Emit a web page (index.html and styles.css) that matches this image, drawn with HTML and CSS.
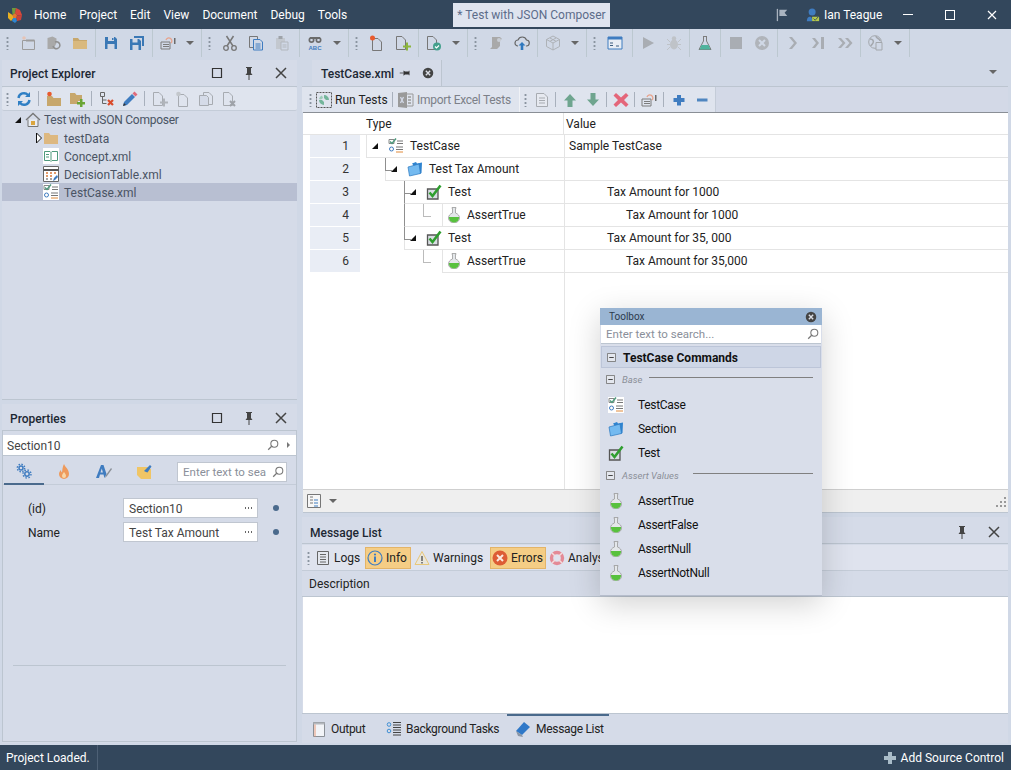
FILE: index.html
```html
<!DOCTYPE html>
<html lang="en">
<head>
    <meta charset="UTF-8">
    <meta name="viewport" content="width=device-width, initial-scale=1.0">
    <title>Test with JSON Composer</title>
    <link rel="stylesheet" href="styles.css">
</head>
<body>
    <!-- icon sheet -->
    <svg class="icon-sheet" xmlns="http://www.w3.org/2000/svg">
        <symbol id="i-logo" viewBox="0 0 16 16"><path d="M5 1h4L8 6 5.500 8z" fill="#6f9a3c"/><path d="M9 1l4 2 2 5-5 .500L8 6z" fill="#d8483a"/><path d="M1 5l4.500 3L7 11l-3 3-3-3z" fill="#e8b022"/><path d="M15 8l-1 5-4 1-1-3 1-2.500z" fill="#c9433a"/><path d="M6 11l3 0 1 3-2 2-3-2z" fill="#2f86cf"/><path d="M5.500 8L8 6l2 2.500L9 11H6.500z" fill="#e6762e"/></symbol>
        <symbol id="i-flag" viewBox="0 0 16 16"><path d="M2 1h1.500v14H2z" fill="#a9b3bf"/><path d="M5 2h9l-3 3.500L14 9H5z" fill="#a9b3bf"/></symbol>
        <symbol id="i-user" viewBox="0 0 16 16"><circle cx="7" cy="4.500" r="4" fill="#3f7cc0"/><path d="M1 15c0-5 3-5 4-5s2 1 2 5z" fill="#3f7cc0"/><path d="M7 10h8v5H7z" fill="#b5c94c"/><path d="M8.500 12l2 2 3.500-4" fill="none" stroke="#34495e"/></symbol>
        <symbol id="i-new-dim" viewBox="0 0 16 16"><path d="M2.500 5.500h12v9h-12z" fill="none" stroke="#9c9c9c"/><path d="M6 5.500h8.500" stroke="#9c9c9c" stroke-width="2"/><circle cx="4" cy="3" r="1.800" fill="#e6c3b5"/></symbol>
        <symbol id="i-recent-dim" viewBox="0 0 16 16"><path d="M1.500 14V3l5-1.500 4 2V8l-3 6z" fill="#a9a9a9"/><path d="M9 7a3.500 3.500 0 1 1-2 4" fill="none" stroke="#8f8f8f" stroke-width="1.500"/></symbol>
        <symbol id="i-folder" viewBox="0 0 16 16"><path d="M1 3h5l1.500 2H15v9H1z" fill="#c7a76c"/><path d="M1 6h14v8H1z" fill="#d9b97e"/></symbol>
        <symbol id="i-folder-light" viewBox="0 0 16 16"><path d="M1 3h5l1.500 2H15v9H1z" fill="#ddb880"/></symbol>
        <symbol id="i-save" viewBox="0 0 16 16"><path d="M2 2h10l2 2v10H2z" fill="#3a78b5"/><path d="M5 2h6v4H5z" fill="#d0d8e6"/><path d="M4.500 9h7v5h-7z" fill="#d0d8e6"/><path d="M9 3h1.500v2H9z" fill="#3a78b5"/></symbol>
        <symbol id="i-save-all" viewBox="0 0 16 16"><path d="M5 1h10v10h-2V3H5z" fill="#3a78b5"/><path d="M1 4h9l2 2v9H1z" fill="#3a78b5"/><path d="M3.500 4h5v3.500h-5z" fill="#d0d8e6"/><path d="M3.500 10h6v5h-6z" fill="#d0d8e6"/></symbol>
        <symbol id="i-deploy" viewBox="0 0 16 16"><path d="M1 7h9v7H1z" fill="none" stroke="#7c7c7c"/><path d="M3 9.500h6M3 11.500h6" stroke="#7c7c7c"/><path d="M6 5a3 3 0 1 1 5 3" fill="none" stroke="#e8a38c" stroke-width="1.300"/><path d="M14 3h1.500v6H14z" fill="#6a6a6a"/></symbol>
        <symbol id="i-cut" viewBox="0 0 16 16"><circle cx="4" cy="13" r="2.300" fill="none" stroke="#777" stroke-width="1.300"/><circle cx="12" cy="13" r="2.300" fill="none" stroke="#777" stroke-width="1.300"/><path d="M5 11 11.500 1M11 11 4.500 1" stroke="#777" stroke-width="1.500"/></symbol>
        <symbol id="i-copy" viewBox="0 0 16 16"><path d="M1.500 1.500h8v11h-8z" fill="#d0d8e6" stroke="#777"/><path d="M5.500 4.500H12l2.500 2.500v8h-9z" fill="#d0d8e6" stroke="#3f7cc0"/><path d="M7.500 9h5M7.500 11h5M7.500 13h5" stroke="#3f7cc0"/></symbol>
        <symbol id="i-paste-dim" viewBox="0 0 16 16"><path d="M2 3h9v11H2z" fill="#c3c8cf"/><path d="M4.500 1h4v3h-4z" fill="#9ea3a9"/><path d="M7 7h7v8H7z" fill="#d0d8e6" stroke="#b2b7bd"/><path d="M8.500 10h4M8.500 12h4" stroke="#b2b7bd"/></symbol>
        <symbol id="i-find" viewBox="0 0 16 16"><circle cx="4.500" cy="5" r="3" fill="#6b6b6b"/><circle cx="11.500" cy="5" r="3" fill="#6b6b6b"/><circle cx="4.500" cy="5" r="1.300" fill="#d0d8e6"/><circle cx="11.500" cy="5" r="1.300" fill="#d0d8e6"/><path d="M3 2h10v2H3z" fill="#6b6b6b"/><text x="8" y="15" text-anchor="middle" class="abc">ABC</text></symbol>
        <symbol id="i-file-new" viewBox="0 0 16 16"><path d="M3.500 3.500H9l3.500 3.500v8.500h-9z" fill="none" stroke="#777"/><circle cx="3.500" cy="3" r="2.500" fill="#e85a2e"/></symbol>
        <symbol id="i-file-add" viewBox="0 0 16 16"><path d="M1.500 1.500H7L10.500 5v9.500h-9z" fill="none" stroke="#777"/><path d="M11 7.500h2v3h3v2h-3v3h-2v-3H8v-2h3z" fill="#8cb63c"/></symbol>
        <symbol id="i-file-check" viewBox="0 0 16 16"><path d="M1.500 1.500H7L10.500 5v9.500h-9z" fill="none" stroke="#777"/><circle cx="11" cy="11.500" r="4" fill="#44a08d"/><path d="M9 11.500l1.500 1.500 2.500-2.500" fill="none" stroke="#fff" stroke-width="1.200"/></symbol>
        <symbol id="i-scroll-dim" viewBox="0 0 16 16"><path d="M4 2h8l2 2-2 1v6l-3 3H2l2-2z" fill="#a9a9a9"/><circle cx="11" cy="5" r="2" fill="#c8cdd4"/></symbol>
        <symbol id="i-upload" viewBox="0 0 16 16"><path d="M4 11a3 3 0 0 1 0-6 4.500 4.500 0 0 1 8.500 0 3 3 0 0 1-.500 6" fill="none" stroke="#666" stroke-width="1.200"/><path d="M8 7l3.500 3.500H9.300V15H6.700v-4.500H4.500z" fill="#2f78be"/></symbol>
        <symbol id="i-cube-dim" viewBox="0 0 16 16"><path d="M8 1l6.500 3.500v7L8 15l-6.500-3.500v-7zM1.500 4.500 8 8l6.500-3.500M8 8v7M5 3l6 3.300M11 3 5 6.300" fill="none" stroke="#aeb2b7"/></symbol>
        <symbol id="i-console" viewBox="0 0 16 16"><path d="M1 2h14v12H1z" fill="#e8edf4" stroke="#3f7cc0"/><path d="M1 2h14v2.500H1z" fill="#3f7cc0"/><path d="M3 8h3M3 10.500h3M9 11h3" stroke="#3f5f80"/></symbol>
        <symbol id="i-play-dim" viewBox="0 0 16 16"><path d="M3 2l11 6-11 6z" fill="#a9adb3"/></symbol>
        <symbol id="i-bug-dim" viewBox="0 0 16 16"><ellipse cx="8" cy="9.500" rx="4" ry="5" fill="#bfc3c8"/><circle cx="8" cy="3.500" r="2.200" fill="#bfc3c8"/><path d="M1 4l3 3M15 4l-3 3M1 9.500h3M15 9.500h-3M1 15l3-3M15 15l-3-3" stroke="#bfc3c8"/></symbol>
        <symbol id="i-flask" viewBox="0 0 16 16"><path d="M6 1.500h4M6.500 1.500V6L2 14.500h12L9.500 6V1.500" fill="none" stroke="#7c7c7c"/><path d="M4.500 10h7l2 4.500h-11z" fill="#4fb39d"/></symbol>
        <symbol id="i-stop-dim" viewBox="0 0 16 16"><path d="M2 2h12v12H2z" fill="#a9adb3"/></symbol>
        <symbol id="i-cancel-dim" viewBox="0 0 16 16"><circle cx="8" cy="8" r="7" fill="#b0b4ba"/><path d="M5 5l6 6M11 5l-6 6" stroke="#d0d8e6" stroke-width="2"/></symbol>
        <symbol id="i-chev-dim" viewBox="0 0 16 16"><path d="M4 2h3l5 6-5 6H4l5-6z" fill="#a9adb3"/></symbol>
        <symbol id="i-chev-end-dim" viewBox="0 0 16 16"><path d="M1 3h3l4 5-4 5H1l4-5z" fill="#a9adb3"/><path d="M10 2h3v12h-3z" fill="#a9adb3"/></symbol>
        <symbol id="i-chev-dbl-dim" viewBox="0 0 16 16"><path d="M1 3h3l4.500 5L4 13H1l4.500-5zM8 3h3l4.500 5-4.500 5H8l4.500-5z" fill="#a9adb3"/></symbol>
        <symbol id="i-globe-dim" viewBox="0 0 16 16"><circle cx="7" cy="7" r="6.300" fill="none" stroke="#a3a7ac"/><path d="M2 4c3 0 4 2 3 4s-2 2-2 3M8 1c0 3 4 2 4 5" fill="none" stroke="#a3a7ac" stroke-width="1.500"/><path d="M8 7.500h6v7.500H8z" fill="#d0d8e6" stroke="#a3a7ac"/></symbol>
        <symbol id="i-refresh" viewBox="0 0 16 16"><path d="M2.500 7a5.500 5.500 0 0 1 9.500-3" fill="none" stroke="#2f7fc4" stroke-width="2.400"/><path d="M13.500 9A5.500 5.500 0 0 1 4 12" fill="none" stroke="#2f7fc4" stroke-width="2.400"/><path d="M14 1v5h-5zM2 15v-5h5z" fill="#2f7fc4"/></symbol>
        <symbol id="i-folder-new" viewBox="0 0 16 16"><path d="M1 5h5l1.500 2H15v8H1z" fill="#c7a76c"/><circle cx="3.500" cy="3" r="2.300" fill="#e85a2e"/></symbol>
        <symbol id="i-folder-add" viewBox="0 0 16 16"><path d="M1 2h5l1.500 2H13v6h-4v3H1z" fill="#c7a76c"/><path d="M11 8h2.500v3H16v2.500h-2.500V16H11v-2.500H8V11h3z" fill="#6aa535"/></symbol>
        <symbol id="i-tree-del" viewBox="0 0 16 16"><path d="M1.500 1.500h4v4h-4zM3.500 5.500v7h4M3.500 9h4" fill="none" stroke="#666"/><path d="M9 9l5 5M14 9l-5 5" stroke="#d94b2b" stroke-width="2.200"/></symbol>
        <symbol id="i-pencil" viewBox="0 0 16 16"><path d="M1 15l1-4 8-8 3 3-8 8z" fill="#3f7cc0"/><path d="M10.500 2.500l2-2 3 3-2 2z" fill="#e06a7a"/><path d="M1 15l1-3 2 2z" fill="#333"/></symbol>
        <symbol id="i-file-add-dim" viewBox="0 0 16 16"><path d="M1.500 1.500H7L10.500 5v9.500h-9z" fill="none" stroke="#a7abb1"/><path d="M11 7.500h2v3h3v2h-3v3h-2v-3H8v-2h3z" fill="#b0b4ba"/></symbol>
        <symbol id="i-file-new-dim" viewBox="0 0 16 16"><path d="M3.500 3.500H9l3.500 3.500v8.500h-9z" fill="none" stroke="#a7abb1"/><circle cx="3.500" cy="3" r="2.300" fill="#c3c7cc"/></symbol>
        <symbol id="i-files-dim" viewBox="0 0 16 16"><path d="M5.500 1.500H11L14.500 5v8.500h-9z" fill="none" stroke="#a7abb1"/><path d="M1.500 4.500h7l2 2v8h-9z" fill="#d5dbe8" stroke="#a7abb1"/></symbol>
        <symbol id="i-file-x-dim" viewBox="0 0 16 16"><path d="M2.500 1.500H8L11.500 5v9.500h-9z" fill="none" stroke="#a7abb1"/><path d="M9 10l5 5M14 10l-5 5" stroke="#9ea2a8" stroke-width="2"/></symbol>
        <symbol id="i-home" viewBox="0 0 16 16"><path d="M1 8l7-6.500L15 8" fill="none" stroke="#777" stroke-width="1.300"/><path d="M3 7.500v7h10v-7" fill="#e8ecf2" stroke="#777"/><path d="M6 9h4v4H6z" fill="#dba63f"/></symbol>
        <symbol id="i-concept" viewBox="0 0 16 16"><path d="M0 0h16v16H0z" fill="#fff"/><path d="M1.500 3.500h5.500l1 1 1-1h5.500v9h-5.500l-1 1-1-1H1.500zM8 4.500v8M3 6.500h3M3 9h3" fill="none" stroke="#4f9a7d"/></symbol>
        <symbol id="i-table" viewBox="0 0 16 16"><path d="M0 0h16v16H0z" fill="#fff"/><path d="M.5.500h15v15H.5z" fill="none" stroke="#666"/><path d="M.5 4h15" stroke="#555" stroke-width="2"/><path d="M3 7h2M7 7h2M11 7h2M3 10h2M7 10h2" stroke="#d97a3a" stroke-width="1.500"/><path d="M3 13h2M7 13h2" stroke="#888" stroke-width="1.500"/><path d="M10 15l1-3 3-3 1 2-3 3z" fill="#3f7cc0"/></symbol>
        <symbol id="i-case" viewBox="0 0 16 16"><path d="M1 1.500h5v4H1z" fill="none" stroke="#888"/><path d="M2 3.500l2 2 4-5" fill="none" stroke="#4f9a7d" stroke-width="1.500"/><path d="M9 3h6M9 5.500h6" stroke="#777"/><circle cx="3.500" cy="11" r="2" fill="none" stroke="#3f7cc0"/><path d="M8 9h7M8 11.500h7" stroke="#777"/><path d="M8 14h7" stroke="#e08a3a"/></symbol>
        <symbol id="i-section" viewBox="0 0 16 16"><path d="M5 2.500l4-1.500 1 1.500 5-1-.500 10.500-2 1z" fill="#2f84d0"/><path d="M1 6l11-3 1.500 9.500L2.500 15z" fill="#74baf0" stroke="#2b78c0" stroke-width=".700"/></symbol>
        <symbol id="i-test" viewBox="0 0 16 16"><path d="M1.500 5h10.500v10H1.500z" fill="#d9dde3" stroke="#555" stroke-width="1.300"/><path d="M3.500 8.500l3 3.500L14.500 1.500" fill="none" stroke="#2f9e2f" stroke-width="2.600"/></symbol>
        <symbol id="i-assert" viewBox="0 0 16 16"><path d="M6 .500h4v1H9.500V6c2.500.800 4 2.800 4 5a5.500 5 0 0 1-11 0c0-2.200 1.500-4.200 4-5V1.500H6z" fill="#e4e7ea" stroke="#9a9a9a" stroke-width=".800"/><path d="M3 10h10c.300 3-2 5.500-5 5.500S2.700 13 3 10z" fill="#58c13e"/></symbol>
        <symbol id="i-run" viewBox="0 0 16 16"><path d="M.5.500h15v15H.5z" fill="none" stroke="#555" stroke-dasharray="2 1"/><path d="M8 3a5 5 0 0 1 5 5h-3l-2-2zM3 8a5 5 0 0 0 5 5v-3L6 8z" fill="#74b59b"/><path d="M3 7a5 5 0 0 1 3-3.500l1 2.500-2 1.500z" fill="#9ccbb8"/></symbol>
        <symbol id="i-excel" viewBox="0 0 16 16"><path d="M5 2h10v12H5z" fill="none" stroke="#9a9a9a"/><path d="M0 1l9-1v16l-9-1z" fill="#9a9a9a"/><path d="M2.500 5l3 6M5.500 5l-3 6" stroke="#d3d9e7" stroke-width="1.300"/><path d="M10 5h3M10 8h3M10 11h3" stroke="#9a9a9a" stroke-width="1.500"/></symbol>
        <symbol id="i-doc-dim" viewBox="0 0 16 16"><path d="M2.500 1.500H10l3.500 3.500v9.500h-11z" fill="#e6e9f0" stroke="#a7abb1"/><path d="M5 6h6M5 8.500h6M5 11h6" stroke="#a7abb1"/></symbol>
        <symbol id="i-up" viewBox="0 0 16 16"><path d="M8 2l6 6.500h-3.500V15h-5V8.500H2z" fill="#6fa58f"/></symbol>
        <symbol id="i-down" viewBox="0 0 16 16"><path d="M8 14l6-6.500h-3.500V1h-5v6.500H2z" fill="#6fa58f"/></symbol>
        <symbol id="i-del" viewBox="0 0 16 16"><path d="M3 1l5 4.500L13 1l2.500 2.500L11 8l4.500 4.500L13 15l-5-4.500L3 15 .500 12.500 5 8 .500 3.500z" fill="#e4667a"/></symbol>
        <symbol id="i-plus" viewBox="0 0 16 16"><path d="M6 3h4v3h3.500v4H10v3.500H6V10H2.500V6H6z" fill="#3f7cc0"/></symbol>
        <symbol id="i-minus" viewBox="0 0 16 16"><path d="M3 6.500h10.500v3H3z" fill="#4f86c0"/></symbol>
        <symbol id="i-gears" viewBox="0 0 16 16"><g fill="none" stroke="#3f7cc0"><circle cx="5" cy="5" r="2" stroke-width="1.500"/><circle cx="5" cy="5" r="3.700" stroke-width="1.400" stroke-dasharray="1.500 1.400"/><circle cx="11" cy="11" r="2.200" stroke-width="1.500"/><circle cx="11" cy="11" r="4" stroke-width="1.400" stroke-dasharray="1.500 1.640"/></g></symbol>
        <symbol id="i-flame" viewBox="0 0 16 16"><path d="M8 0c1 3 5 5 5 10a5 5 0 0 1-10 0c0-2 1-3 2-4 0 1.500.500 2 1 2.500C6.500 5 6.500 3 8 0z" fill="#ee9a5c"/><path d="M8 8c1 1.500 2 2.500 2 4a2 2 0 0 1-4 0c0-1.500 1-2.500 2-4z" fill="#f8d7a8"/></symbol>
        <symbol id="i-style" viewBox="0 0 16 16"><path d="M0 14L5 1h2.500l3 9-2 4-1-3.500H4L3 14zM4.500 8.500h2.400L5.800 4.500z" fill="#3f7cc0"/><path d="M9 14l1-3 5-7 1 1-5 7z" fill="#8a8f96"/></symbol>
        <symbol id="i-note" viewBox="0 0 16 16"><path d="M1 3h11v2h3v10H5l-4-4z" fill="#f0c565"/><path d="M8 7l6-6 1.500 1.500-4 6-1.500-.500z" fill="#3f7cc0"/></symbol>
        <symbol id="i-search" viewBox="0 0 16 16"><circle cx="9.500" cy="6.500" r="4" fill="none" stroke="#777" stroke-width="1.200"/><path d="M6.500 9.500l-4 4" stroke="#777" stroke-width="1.500"/></symbol>
        <symbol id="i-logs" viewBox="0 0 16 16"><path d="M2.500 1.500h11v13h-11z" fill="#e4e7ee" stroke="#666"/><path d="M5 4.500h6M5 7h6M5 9.500h6M5 12h6" stroke="#666"/></symbol>
        <symbol id="i-info" viewBox="0 0 16 16"><circle cx="8" cy="8" r="7" fill="none" stroke="#3f7cc0" stroke-width="1.200"/><path d="M7 6.500h2V12H7z" fill="#3f7cc0"/><circle cx="8" cy="4.500" r="1.100" fill="#3f7cc0"/></symbol>
        <symbol id="i-warn" viewBox="0 0 16 16"><path d="M8 1.500l7 13H1z" fill="#e9e6dc" stroke="#e8c77a"/><path d="M7.200 6h1.600v5H7.200zM7.200 12h1.600v1.500H7.200z" fill="#666"/></symbol>
        <symbol id="i-error" viewBox="0 0 16 16"><circle cx="8" cy="8" r="7.500" fill="#dd5c35"/><path d="M5 5l6 6M11 5l-6 6" stroke="#fbe9df" stroke-width="2"/></symbol>
        <symbol id="i-analysis" viewBox="0 0 16 16"><circle cx="8" cy="8" r="5.500" fill="none" stroke="#e48a96" stroke-width="3.400"/><path d="M3 3l3 3M13 3l-3 3M3 13l3-3M13 13l-3-3" stroke="#f4dcdc" stroke-width="1.500"/></symbol>
        <symbol id="i-outline" viewBox="0 0 16 16"><path d="M1.500 1.500h13v13h-13z" fill="#f7f7f7" stroke="#777"/><path d="M4 4h3M4 7h3M4 10h3" stroke="#777"/><path d="M8 7h4M8 10h4M8 13h4" stroke="#3f7cc0"/></symbol>
        <symbol id="i-output" viewBox="0 0 16 16"><path d="M2.500 1.500h11v14h-11z" fill="#f2f4f8" stroke="#8a8f96"/><path d="M2.500 1.500h11v2h-11z" fill="#b4b8be"/><path d="M4 3.500v12" stroke="#e89a7a"/></symbol>
        <symbol id="i-tasks" viewBox="0 0 16 16"><circle cx="3" cy="3.500" r="1.800" fill="none" stroke="#3f8fd4"/><circle cx="3" cy="10" r="1.800" fill="none" stroke="#3f8fd4"/><path d="M7 1.500h8M7 4h8M7 6.500h8M7 9h8M7 11.500h8M7 14h8" stroke="#444"/></symbol>
        <symbol id="i-book" viewBox="0 0 16 16"><path d="M1 10L9 1l6 5-8 8z" fill="#2f78c8"/><path d="M1 10l6 4 1 2-5-1z" fill="#8a96a6"/></symbol>
        <symbol id="i-pin" viewBox="0 0 16 16"><path d="M5 2h6v1h-1v5l1.500 2h-7L6 8V3H5z" fill="#444"/><path d="M8 10v5" stroke="#444"/></symbol>
        <symbol id="i-pin-side" viewBox="0 0 16 16"><path d="M14 5v6h-1v-1H8l-2 1.500v-7L8 6h5V5z" fill="#333"/><path d="M6 8H1" stroke="#333"/></symbol>
        <symbol id="i-close" viewBox="0 0 16 16"><path d="M3 3l10 10M13 3L3 13" stroke="#444" stroke-width="1.500"/></symbol>
        <symbol id="i-max" viewBox="0 0 16 16"><path d="M3.500 3.500h9v9h-9z" fill="none" stroke="#333" stroke-width="1.200"/></symbol>
        <symbol id="i-close-round" viewBox="0 0 16 16"><circle cx="8" cy="8" r="6" fill="#444"/><path d="M5.500 5.500l5 5M10.500 5.500l-5 5" stroke="#dcdfe6" stroke-width="1.600"/></symbol>
        <symbol id="i-exp" viewBox="0 0 8 8"><path d="M7 1v6H1z" fill="#111"/></symbol>
        <symbol id="i-col" viewBox="0 0 8 12"><path d="M1.500 1l5 5-5 5z" fill="#fff" stroke="#111"/></symbol>
        <symbol id="i-drop" viewBox="0 0 8 8"><path d="M0 2h8L4 6z" fill="#666"/></symbol>
        <symbol id="i-add-src" viewBox="0 0 16 16"><path d="M6 2h4v4h4v4h-4v4H6v-4H2V6h4z" fill="#a9bcc8"/></symbol>
        <symbol id="i-collapse" viewBox="0 0 10 10"><path d="M.5.500h9v9h-9z" fill="#e4e7ee" stroke="#777"/><path d="M2.500 5h5" stroke="#333"/></symbol>
    </svg>

    <header class="titlebar">
        <svg class="ico logo"><use href="#i-logo"/></svg>
        <nav class="menu">
            <span>Home</span><span>Project</span><span>Edit</span><span>View</span><span>Document</span><span>Debug</span><span>Tools</span>
        </nav>
        <div class="project-tab">* Test with JSON Composer</div>
        <svg class="ico flag"><use href="#i-flag"/></svg>
        <svg class="ico user"><use href="#i-user"/></svg>
        <span class="user-name">Ian Teague</span>
        <div class="window-btns">
            <span class="win-min"></span>
            <span class="win-max"></span>
            <svg class="win-close" viewBox="0 0 10 10"><path d="M1 1l8 8M9 1L1 9" stroke="#fff" stroke-width="1.200"/></svg>
        </div>
    </header>

    <div class="main-toolbar">
        <div class="tb-group"><span class="grip"></span><span class="tb-btn"><svg class="ico"><use href="#i-new-dim"/></svg></span><span class="tb-btn"><svg class="ico"><use href="#i-recent-dim"/></svg></span><span class="tb-btn"><svg class="ico"><use href="#i-folder"/></svg></span></div>
        <div class="tb-group"><span class="tb-btn"><svg class="ico"><use href="#i-save"/></svg></span><span class="tb-btn"><svg class="ico"><use href="#i-save-all"/></svg></span></div>
        <div class="tb-group"><span class="tb-btn"><svg class="ico"><use href="#i-deploy"/></svg></span><span class="tb-drop"><svg class="caret"><use href="#i-drop"/></svg></span></div>
        <div class="tb-group wide"><span class="grip"></span><span class="tb-btn"><svg class="ico"><use href="#i-cut"/></svg></span><span class="tb-btn"><svg class="ico"><use href="#i-copy"/></svg></span><span class="tb-btn"><svg class="ico"><use href="#i-paste-dim"/></svg></span></div>
        <div class="tb-group"><span class="tb-btn"><svg class="ico"><use href="#i-find"/></svg></span><span class="tb-drop"><svg class="caret"><use href="#i-drop"/></svg></span></div>
        <div class="tb-group"><span class="grip"></span><span class="tb-btn"><svg class="ico"><use href="#i-file-new"/></svg></span><span class="tb-btn"><svg class="ico"><use href="#i-file-add"/></svg></span></div>
        <div class="tb-group"><span class="tb-btn"><svg class="ico"><use href="#i-file-check"/></svg></span><span class="tb-drop"><svg class="caret"><use href="#i-drop"/></svg></span></div>
        <div class="tb-group"><span class="grip"></span><span class="tb-btn"><svg class="ico"><use href="#i-scroll-dim"/></svg></span><span class="tb-btn"><svg class="ico"><use href="#i-upload"/></svg></span></div>
        <div class="tb-group"><span class="tb-btn"><svg class="ico"><use href="#i-cube-dim"/></svg></span><span class="tb-drop"><svg class="caret"><use href="#i-drop"/></svg></span></div>
        <div class="tb-group wide"><span class="grip"></span><span class="tb-btn"><svg class="ico"><use href="#i-console"/></svg></span></div>
        <div class="tb-group"><span class="tb-btn"><svg class="ico"><use href="#i-play-dim"/></svg></span><span class="tb-btn"><svg class="ico"><use href="#i-bug-dim"/></svg></span></div>
        <div class="tb-group narrow"><span class="tb-btn"><svg class="ico"><use href="#i-flask"/></svg></span></div>
        <div class="tb-group"><span class="tb-btn"><svg class="ico"><use href="#i-stop-dim"/></svg></span><span class="tb-btn"><svg class="ico"><use href="#i-cancel-dim"/></svg></span></div>
        <div class="tb-group"><span class="tb-btn"><svg class="ico"><use href="#i-chev-dim"/></svg></span><span class="tb-btn"><svg class="ico"><use href="#i-chev-end-dim"/></svg></span><span class="tb-btn"><svg class="ico"><use href="#i-chev-dbl-dim"/></svg></span></div>
        <div class="tb-group"><span class="tb-btn"><svg class="ico"><use href="#i-globe-dim"/></svg></span><span class="tb-drop"><svg class="caret"><use href="#i-drop"/></svg></span></div>
    </div>

    <div class="workspace">
        <div class="left-col">
            <section class="panel explorer">
                <div class="panel-head">
                    <h2>Project Explorer</h2>
                    <svg class="ico head-btn"><use href="#i-max"/></svg>
                    <svg class="ico head-btn"><use href="#i-pin"/></svg>
                    <svg class="ico head-btn"><use href="#i-close"/></svg>
                </div>
                <div class="explorer-tools">
                    <span class="grip"></span>
                    <span class="et-btn"><svg class="ico"><use href="#i-refresh"/></svg></span>
                    <span class="et-sep"></span>
                    <span class="et-btn"><svg class="ico"><use href="#i-folder-new"/></svg></span>
                    <span class="et-btn"><svg class="ico"><use href="#i-folder-add"/></svg></span>
                    <span class="et-sep"></span>
                    <span class="et-btn"><svg class="ico"><use href="#i-tree-del"/></svg></span>
                    <span class="et-btn"><svg class="ico"><use href="#i-pencil"/></svg></span>
                    <span class="et-sep"></span>
                    <span class="et-btn"><svg class="ico"><use href="#i-file-add-dim"/></svg></span>
                    <span class="et-btn"><svg class="ico"><use href="#i-file-new-dim"/></svg></span>
                    <span class="et-btn"><svg class="ico"><use href="#i-files-dim"/></svg></span>
                    <span class="et-btn"><svg class="ico"><use href="#i-file-x-dim"/></svg></span>
                </div>
                <ul class="file-tree">
                    <li class="root"><svg class="tw"><use href="#i-exp"/></svg><svg class="ico"><use href="#i-home"/></svg><span class="muted">Test with JSON Composer</span></li>
                    <li class="child"><svg class="tw-col"><use href="#i-col"/></svg><svg class="ico"><use href="#i-folder-light"/></svg><span>testData</span></li>
                    <li class="child"><svg class="ico"><use href="#i-concept"/></svg><span>Concept.xml</span></li>
                    <li class="child"><svg class="ico"><use href="#i-table"/></svg><span>DecisionTable.xml</span></li>
                    <li class="child selected"><svg class="ico white"><use href="#i-case"/></svg><span>TestCase.xml</span></li>
                </ul>
            </section>

            <section class="panel properties">
                <div class="panel-head">
                    <h2>Properties</h2>
                    <svg class="ico head-btn"><use href="#i-max"/></svg>
                    <svg class="ico head-btn"><use href="#i-pin"/></svg>
                    <svg class="ico head-btn"><use href="#i-close"/></svg>
                </div>
                <div class="prop-body">
                    <div class="object-select">
                        <span>Section10</span>
                        <svg class="ico small"><use href="#i-search"/></svg>
                        <span class="mini-arrow"></span>
                    </div>
                    <div class="prop-tabs">
                        <span class="prop-tab active"><svg class="ico"><use href="#i-gears"/></svg></span>
                        <span class="prop-tab"><svg class="ico"><use href="#i-flame"/></svg></span>
                        <span class="prop-tab"><svg class="ico"><use href="#i-style"/></svg></span>
                        <span class="prop-tab"><svg class="ico"><use href="#i-note"/></svg></span>
                        <div class="prop-search"><span>Enter text to sea</span><svg class="ico small"><use href="#i-search"/></svg></div>
                    </div>
                    <div class="prop-row">
                        <label>(id)</label>
                        <div class="prop-input"><span>Section10</span><i class="dots"></i></div>
                        <span class="prop-dot"></span>
                    </div>
                    <div class="prop-row">
                        <label>Name</label>
                        <div class="prop-input"><span>Test Tax Amount</span><i class="dots"></i></div>
                        <span class="prop-dot"></span>
                    </div>
                    <div class="prop-rule"></div>
                </div>
            </section>
        </div>

        <div class="right-col">
            <section class="doc">
                <div class="doc-tabs">
                    <div class="doc-tab">
                        <span>TestCase.xml</span>
                        <svg class="ico pin-side"><use href="#i-pin-side"/></svg>
                        <svg class="ico tab-close"><use href="#i-close-round"/></svg>
                    </div>
                    <svg class="caret tabs-caret"><use href="#i-drop"/></svg>
                </div>
                <div class="doc-tools">
                    <div class="doc-tools-a">
                        <span class="grip"></span>
                        <span class="text-btn"><svg class="ico"><use href="#i-run"/></svg>Run Tests</span>
                        <span class="et-sep"></span>
                        <span class="text-btn off"><svg class="ico"><use href="#i-excel"/></svg>Import Excel Tests</span>
                    </div>
                    <div class="doc-tools-b">
                        <span class="grip"></span>
                        <span class="dt-btn"><svg class="ico"><use href="#i-doc-dim"/></svg></span>
                        <span class="et-sep"></span>
                        <span class="dt-btn"><svg class="ico"><use href="#i-up"/></svg></span>
                        <span class="dt-btn"><svg class="ico"><use href="#i-down"/></svg></span>
                        <span class="et-sep"></span>
                        <span class="dt-btn"><svg class="ico"><use href="#i-del"/></svg></span>
                        <span class="et-sep"></span>
                        <span class="dt-btn"><svg class="ico"><use href="#i-deploy"/></svg></span>
                        <span class="et-sep last"></span>
                        <span class="dt-btn"><svg class="ico"><use href="#i-plus"/></svg></span>
                        <span class="dt-btn"><svg class="ico"><use href="#i-minus"/></svg></span>
                    </div>
                </div>
                <div class="grid">
                    <div class="grid-head">
                        <div class="col-type">Type</div>
                        <div class="col-value">Value</div>
                    </div>
                    <div class="grid-row">
                        <div class="row-num">1</div>
                        <div class="type-wrap"><div class="type-cell depth-0"><svg class="tw"><use href="#i-exp"/></svg><svg class="ico"><use href="#i-case"/></svg><span>TestCase</span></div></div>
                        <div class="value-cell">Sample TestCase</div>
                    </div>
                    <div class="grid-row">
                        <div class="row-num">2</div>
                        <div class="type-wrap"><div class="type-cell depth-1 link"><svg class="tw"><use href="#i-exp"/></svg><svg class="ico"><use href="#i-section"/></svg><span>Test Tax Amount</span></div></div>
                        <div class="value-cell"></div>
                    </div>
                    <div class="grid-row">
                        <div class="row-num">3</div>
                        <div class="type-wrap"><div class="type-cell depth-2 rail link"><svg class="tw"><use href="#i-exp"/></svg><svg class="ico"><use href="#i-test"/></svg><span>Test</span></div></div>
                        <div class="value-cell val-2">Tax Amount for 1000</div>
                    </div>
                    <div class="grid-row">
                        <div class="row-num">4</div>
                        <div class="type-wrap"><div class="type-cell depth-2 rail"><div class="leaf-cell"><svg class="ico"><use href="#i-assert"/></svg><span>AssertTrue</span></div></div></div>
                        <div class="value-cell val-3">Tax Amount for 1000</div>
                    </div>
                    <div class="grid-row">
                        <div class="row-num">5</div>
                        <div class="type-wrap"><div class="type-cell depth-2 link"><svg class="tw"><use href="#i-exp"/></svg><svg class="ico"><use href="#i-test"/></svg><span>Test</span></div></div>
                        <div class="value-cell val-2">Tax Amount for 35, 000</div>
                    </div>
                    <div class="grid-row">
                        <div class="row-num">6</div>
                        <div class="type-wrap"><div class="type-cell depth-3"><div class="leaf-cell"><svg class="ico"><use href="#i-assert"/></svg><span>AssertTrue</span></div></div></div>
                        <div class="value-cell val-3">Tax Amount for 35,000</div>
                    </div>
                    <div class="grid-empty"></div>
                </div>
                <div class="grid-foot">
                    <svg class="ico"><use href="#i-outline"/></svg>
                    <svg class="caret dark"><use href="#i-drop"/></svg>
                    <svg class="resize" viewBox="0 0 12 12"><path d="M9 1h2v2H9zM5 5h2v2H5zM9 5h2v2H9zM1 9h2v2H1zM5 9h2v2H5zM9 9h2v2H9z" fill="#999"/></svg>
                </div>
            </section>

            <section class="messages">
                <div class="panel-head msg-head">
                    <h2>Message List</h2>
                    <svg class="ico head-btn"><use href="#i-pin"/></svg>
                    <svg class="ico head-btn"><use href="#i-close"/></svg>
                </div>
                <div class="msg-tools">
                    <span class="grip"></span>
                    <span class="msg-btn"><svg class="ico"><use href="#i-logs"/></svg>Logs</span>
                    <span class="msg-btn on"><svg class="ico"><use href="#i-info"/></svg>Info</span>
                    <span class="msg-btn"><svg class="ico"><use href="#i-warn"/></svg>Warnings</span>
                    <span class="msg-btn on"><svg class="ico"><use href="#i-error"/></svg>Errors</span>
                    <span class="msg-btn"><svg class="ico"><use href="#i-analysis"/></svg>Analysis</span>
                </div>
                <div class="msg-columns">Description</div>
                <div class="msg-list"></div>
                <div class="msg-tabs">
                    <span class="msg-tab"><svg class="ico"><use href="#i-output"/></svg>Output</span>
                    <span class="msg-tab"><svg class="ico"><use href="#i-tasks"/></svg>Background Tasks</span>
                    <span class="msg-tab active"><svg class="ico"><use href="#i-book"/></svg>Message List</span>
                </div>
            </section>
        </div>
    </div>

    <footer class="statusbar">
        <span class="status-text">Project Loaded.</span>
        <span class="add-source"><svg class="ico"><use href="#i-add-src"/></svg>Add Source Control</span>
    </footer>

    <aside class="toolbox">
        <div class="toolbox-title"><span>Toolbox</span><svg class="ico small"><use href="#i-close-round"/></svg></div>
        <div class="toolbox-search"><span>Enter text to search...</span><svg class="ico small"><use href="#i-search"/></svg></div>
        <div class="toolbox-head"><svg class="box"><use href="#i-collapse"/></svg>TestCase Commands</div>
        <div class="toolbox-group"><svg class="box"><use href="#i-collapse"/></svg><em>Base</em><span class="group-line"></span></div>
        <div class="toolbox-item"><svg class="ico white"><use href="#i-case"/></svg>TestCase</div>
        <div class="toolbox-item"><svg class="ico"><use href="#i-section"/></svg>Section</div>
        <div class="toolbox-item"><svg class="ico"><use href="#i-test"/></svg>Test</div>
        <div class="toolbox-group long"><svg class="box"><use href="#i-collapse"/></svg><em>Assert Values</em><span class="group-line"></span></div>
        <div class="toolbox-item"><svg class="ico"><use href="#i-assert"/></svg>AssertTrue</div>
        <div class="toolbox-item"><svg class="ico"><use href="#i-assert"/></svg>AssertFalse</div>
        <div class="toolbox-item"><svg class="ico"><use href="#i-assert"/></svg>AssertNull</div>
        <div class="toolbox-item"><svg class="ico"><use href="#i-assert"/></svg>AssertNotNull</div>
    </aside>
</body>
</html>
```

FILE: styles.css
```css
* {
    box-sizing: border-box;
}

html, body {
    height: 100%;
}

body {
    margin: 0;
    display: flex;
    flex-direction: column;
    overflow: hidden;
    position: relative;
    background-color: #d0d8e6;
    font-family: Roboto, "Open Sans", sans-serif;
    font-size: 12px;
    color: #222;
}

.icon-sheet {
    display: none;
}

.ico {
    width: 16px;
    height: 16px;
    flex: none;
    display: block;
}

.ico.small {
    width: 14px;
    height: 14px;
}

.ico.white {
    background-color: #fff;
}

.abc {
    font-family: "Liberation Sans", sans-serif;
    font-size: 6px;
    font-weight: bold;
    fill: #3f7cc0;
}

/* title bar */
.titlebar {
    height: 29px;
    flex: none;
    display: flex;
    align-items: center;
    background-color: #33475c;
    color: #fff;
    padding-left: 7px;
}

.logo {
    margin-right: 11px;
}

.menu {
    display: flex;
    gap: 13px;
    width: 419px;
}

.project-tab {
    width: 157px;
    height: 24px;
    line-height: 24px;
    text-align: center;
    white-space: nowrap;
    background-color: #dfe4ef;
    color: #5c6c8a;
}

.flag {
    margin-left: 165px;
    width: 14px;
    height: 14px;
}

.user {
    margin-left: 17px;
    margin-right: 4px;
    width: 14px;
    height: 14px;
}

.user-name {
    width: 64px;
}

.window-btns {
    margin-left: 15px;
    display: flex;
    align-items: center;
    gap: 32px;
}

.win-min {
    width: 10px;
    border-top: 1px solid #fff;
}

.win-max {
    width: 10px;
    height: 10px;
    border: 1px solid #fff;
}

.win-close {
    width: 10px;
    height: 10px;
}

/* main toolbar */
.main-toolbar {
    height: 29px;
    flex: none;
    display: flex;
    align-items: flex-start;
}

.tb-group {
    height: 28px;
    display: flex;
    align-items: center;
    padding: 0 2px 1px;
    border-right: 1px solid #bcc8d0;
}

.tb-group.wide {
    padding-right: 4px;
}

.tb-btn {
    width: 26px;
    display: flex;
    justify-content: center;
}

.tb-drop {
    width: 18px;
    display: flex;
    justify-content: center;
}

.caret {
    width: 8px;
    height: 8px;
    display: block;
}

.grip {
    width: 13px;
    height: 14px;
    flex: none;
    background-image: radial-gradient(circle, #8a94a0 1px, transparent 1.200px);
    background-size: 3px 4px;
    background-repeat: repeat-y;
    background-position: 4px 0;
}

/* layout */
.workspace {
    flex: 1;
    min-height: 0;
    display: flex;
    gap: 5px;
    padding: 2px 3px 2px 2px;
}

.left-col {
    width: 295px;
    display: flex;
    flex-direction: column;
    gap: 4px;
}

.right-col {
    flex: 1;
    min-width: 0;
    display: flex;
    flex-direction: column;
    gap: 4px;
}

.panel {
    background-color: #d5dbe8;
    display: flex;
    flex-direction: column;
}

.explorer {
    height: 340px;
    border-bottom: 1px solid #bcc5d0;
}

.properties {
    flex: 1;
}

.properties .panel-head {
    padding-top: 2px;
}

.panel-head {
    height: 27px;
    flex: none;
    display: flex;
    align-items: center;
    padding-left: 8px;
    border-bottom: 1px solid #bcc5d0;
}

.panel-head h2 {
    flex: 1;
    margin: 0;
    padding-top: 2px;
    font-size: 12px;
    font-weight: 500;
    color: #1c2733;
}

.head-btn {
    margin-right: 16px;
    margin-left: 0;
}

.panel-head .head-btn:last-child {
    margin-right: 8px;
}

.explorer-tools {
    height: 24px;
    flex: none;
    display: flex;
    align-items: center;
    background-color: #dfe4ee;
    border-bottom: 1px solid #c4ccd8;
    border-radius: 2px;
}

.explorer-tools .grip,
.doc-tools .grip,
.msg-tools .grip {
    width: 10px;
}

.et-btn {
    width: 23px;
    display: flex;
    justify-content: center;
}

.et-sep {
    width: 1px;
    height: 15px;
    background-color: #a8b0bc;
    margin: 0 3px;
    flex: none;
}

.file-tree {
    list-style: none;
    margin: 0;
    padding: 0;
    flex: 1;
}

.file-tree li {
    height: 18px;
    display: flex;
    align-items: center;
    gap: 5px;
    padding-left: 41px;
}

.file-tree .root {
    height: 17px;
    padding-left: 12px;
    gap: 3px;
    margin-bottom: 1px;
}

.file-tree .child {
    position: relative;
}

.file-tree .child span {
    padding-top: 2px;
    color: #4a5464;
}

.muted {
    color: #4a5464;
    letter-spacing: -0.25px;
}

.file-tree .selected {
    background-color: #b8bfd2;
}

.tw {
    width: 8px;
    height: 8px;
    flex: none;
}

.tw-col {
    width: 8px;
    height: 12px;
    position: absolute;
    left: 33px;
    top: 3px;
}

/* properties */
.prop-body {
    flex: 1;
    display: flex;
    flex-direction: column;
    border: 1px solid #bcc5d0;
    border-top: none;
    margin-bottom: 1px;
}

.object-select {
    height: 21px;
    margin-top: 4px;
    background-color: #fff;
    display: flex;
    align-items: center;
    gap: 2px;
    padding: 0 6px 0 4px;
    border-bottom: 1px solid #bcc5d0;
}

.object-select > span:first-child {
    flex: 1;
    padding-top: 2px;
    color: #444;
}

.mini-arrow {
    width: 0;
    height: 0;
    margin-left: 5px;
    border-left: 3px solid #777;
    border-top: 3px solid transparent;
    border-bottom: 3px solid transparent;
}

.prop-tabs {
    height: 29px;
    display: flex;
    align-items: center;
    border-bottom: 1px solid #c4ccd8;
    padding-left: 1px;
}

.prop-tab {
    width: 40px;
    height: 29px;
    padding-top: 3px;
    display: flex;
    align-items: center;
    justify-content: center;
}

.prop-tab.active {
    border-bottom: 2px solid #4a6a8c;
}

.prop-search {
    width: 110px;
    height: 20px;
    margin-left: 13px;
    margin-top: 4px;
    display: flex;
    align-items: center;
    justify-content: space-between;
    background-color: #fff;
    border: 1px solid #c0c6d0;
    padding: 0 1px 0 5px;
    color: #8a8f9a;
    font-size: 11.500px;
    white-space: nowrap;
    overflow: hidden;
}

.prop-row {
    height: 20px;
    margin-bottom: 4px;
    display: flex;
    align-items: center;
    padding-left: 25px;
}

.prop-tabs + .prop-row {
    margin-top: 13px;
}

.prop-row label {
    width: 95px;
    padding-top: 2px;
    color: #222;
}

.prop-input {
    width: 135px;
    height: 20px;
    display: flex;
    align-items: center;
    justify-content: space-between;
    background-color: #fff;
    border: 1px solid #c0c6d0;
    padding: 0 4px 0 5px;
    color: #444;
}

.prop-input span {
    padding-top: 2px;
}

.dots {
    width: 9px;
    height: 2px;
    background-image: radial-gradient(circle, #666 1px, transparent 1.100px);
    background-size: 3px 2px;
}

.prop-dot {
    width: 6px;
    height: 6px;
    margin-left: 15px;
    border-radius: 50%;
    background-color: #4a6a8c;
}

.prop-rule {
    margin: 119px 10px 0;
    border-top: 1px solid #bcc5d0;
}

/* document area */
.doc {
    height: 453px;
    flex: none;
    display: flex;
    flex-direction: column;
}

.doc-tabs {
    height: 27px;
    flex: none;
    display: flex;
    align-items: flex-end;
    padding-left: 10px;
    border-bottom: 1px solid #bcc5d0;
    position: relative;
}

.doc-tab {
    width: 130px;
    height: 26px;
    display: flex;
    align-items: center;
    padding-left: 9px;
    background-color: #d5dbe8;
    font-weight: 500;
    color: #1c2733;
    border-right: 1px solid #bcc5d0;
}

.doc-tab span {
    width: 78px;
    padding-top: 2px;
}

.pin-side {
    width: 12px;
    height: 12px;
    margin-right: 10px;
}

.tab-close {
    width: 14px;
    height: 14px;
}

.tabs-caret {
    position: absolute;
    right: 11px;
    top: 8px;
}

.doc-tools {
    height: 25px;
    flex: none;
    display: flex;
    background-color: #d3d9e7;
}

.doc-tools-a {
    width: 217px;
    display: flex;
    align-items: center;
    background-color: #dfe4ee;
    padding-left: 3px;
}

.doc-tools-b {
    width: 197px;
    display: flex;
    align-items: center;
    background-color: #dfe4ee;
    border-left: 1px solid #f0f2f6;
    border-right: 1px solid #c4ccd8;
}

.doc-tools-b .et-sep {
    margin: 0 2px;
}

.doc-tools-b .et-sep.last {
    margin: 0 3px;
}

.text-btn {
    width: 74px;
    flex: none;
    display: flex;
    align-items: center;
    gap: 3px;
    padding-left: 1px;
    color: #222;
    white-space: nowrap;
}

.text-btn.off {
    width: 118px;
    padding-left: 2px;
    color: #7c8088;
    letter-spacing: -0.28px;
}

.dt-btn {
    width: 23px;
    display: flex;
    justify-content: center;
}

.grid {
    flex: 1;
    min-height: 0;
    display: flex;
    flex-direction: column;
    background-color: #fff;
    border-top: 1px solid #8a8f96;
    margin-left: 1px;
    position: relative;
}

.grid-head {
    height: 22px;
    flex: none;
    display: flex;
    border-bottom: 1px solid #e4e4e4;
    color: #222;
    line-height: 23px;
}

.col-type {
    width: 261px;
    padding-left: 63px;
    border-right: 1px solid #e4e4e4;
}

.col-value {
    padding-left: 2px;
}

.grid-row {
    height: 23px;
    flex: none;
    display: flex;
}

.row-num {
    width: 50px;
    margin-left: 7px;
    flex: none;
    background-color: #e9edf5;
    border-bottom: 1px solid #fff;
    text-align: right;
    padding-right: 11px;
    line-height: 22px;
    color: #333;
}

.type-wrap {
    width: 204px;
    flex: none;
}

.type-cell {
    height: 23px;
    display: flex;
    align-items: center;
    border-left: 1px solid #e4e4e4;
    border-bottom: 1px solid #e4e4e4;
    padding-bottom: 1px;
    position: relative;
}

.type-cell > .tw {
    margin-left: 4px;
    margin-right: 9px;
}

.type-cell > span {
    margin-left: 6px;
}

.depth-0 { margin-left: 6px; }
.depth-1 { margin-left: 25px; }
.depth-2 { margin-left: 44px; }
.depth-3 { margin-left: 82px; }

.type-cell.rail {
    border-left-color: #8f8f8f;
}

.type-cell.link::before {
    content: "";
    position: absolute;
    left: -1px;
    top: 0;
    width: 7px;
    height: 12px;
    border-left: 1px solid #8f8f8f;
    border-bottom: 1px solid #8f8f8f;
}

.leaf-cell {
    height: 22px;
    margin-left: 37px;
    flex: 1;
    display: flex;
    align-items: center;
    gap: 5px;
    padding-left: 3px;
    border-left: 1px solid #e4e4e4;
    position: relative;
}

.leaf-cell::before {
    content: "";
    position: absolute;
    left: -20px;
    top: 0;
    width: 7px;
    height: 12px;
    border-left: 1px solid #bbb;
    border-bottom: 1px solid #bbb;
}

.depth-3 {
    border-left: none;
}

.depth-3 .leaf-cell {
    margin-left: 0;
}

.value-cell {
    flex: 1;
    border-left: 1px solid #e4e4e4;
    border-bottom: 1px solid #e4e4e4;
    padding-left: 4px;
    line-height: 22px;
}

.val-2 { padding-left: 42px; }
.val-3 { padding-left: 61px; }

.grid-empty {
    flex: 1;
    width: 262px;
    border-right: 1px solid #e4e4e4;
}

.grid-foot {
    height: 24px;
    flex: none;
    margin-left: 1px;
    display: flex;
    align-items: center;
    gap: 6px;
    padding-left: 3px;
    background-color: #efefef;
    border-top: 1px solid #cfcfcf;
    border-bottom: 1px solid #bcc5d0;
    position: relative;
}

.caret.dark {
    margin-left: 1px;
}

.resize {
    position: absolute;
    right: 1px;
    top: 6px;
    width: 12px;
    height: 12px;
}

/* message list */
.messages {
    flex: 1;
    display: flex;
    flex-direction: column;
    background-color: #d5dbe8;
}

.msg-head {
    padding-top: 3px;
}

.panel-head.msg-head .head-btn:last-child {
    margin-right: 6px;
}

.msg-tools {
    height: 26px;
    flex: none;
    display: flex;
    align-items: center;
    background-color: #dfe3ee;
    border-bottom: 1px solid #c4ccd8;
    padding-left: 1px;
    margin-top: 1px;
}

.msg-btn {
    height: 22px;
    flex: none;
    display: flex;
    align-items: center;
    gap: 3px;
    padding: 1px 1px 0;
    margin-right: 1px;
    border: 1px solid transparent;
    white-space: nowrap;
}

.msg-btn:nth-child(2) { width: 51px; }
.msg-btn:nth-child(3) { width: 46px; }
.msg-btn:nth-child(4) { width: 77px; }
.msg-btn:nth-child(5) { width: 56px; }

.msg-btn.on {
    background-color: #f5cd85;
    border-color: #e3b468;
}

.msg-columns {
    height: 26px;
    flex: none;
    line-height: 27px;
    padding-left: 7px;
    border-bottom: 1px solid #bcc5d0;
}

.msg-list {
    flex: 1;
    margin-left: 1px;
    background-color: #fff;
}

.msg-tabs {
    height: 30px;
    flex: none;
    display: flex;
    align-items: stretch;
    padding-left: 9px;
    border-top: 1px solid #bcc5d0;
}

.msg-tab {
    flex: none;
    display: flex;
    align-items: center;
    gap: 4px;
    padding-bottom: 1px;
    border-top: 2px solid transparent;
    white-space: nowrap;
    letter-spacing: -0.3px;
}

.msg-tab:nth-child(1) { width: 75px; }
.msg-tab:nth-child(2) { width: 121px; }

.msg-tab.active {
    width: 102px;
    gap: 5px;
    padding-left: 8px;
    border-top-color: #4a6a8c;
}

/* status bar */
.statusbar {
    height: 25px;
    flex: none;
    display: flex;
    align-items: center;
    justify-content: space-between;
    background-color: #33475c;
    color: #fff;
}

.status-text {
    width: 98px;
    padding-left: 6px;
    line-height: 27px;
    height: 25px;
    border-right: 1px solid #4d6075;
}

.add-source {
    display: flex;
    align-items: center;
    gap: 3px;
    padding: 1px 7px 0 0;
}

/* toolbox popup */
.toolbox {
    position: absolute;
    left: 600px;
    top: 308px;
    width: 222px;
    height: 288px;
    background-color: #d9deea;
    box-shadow: 0 8px 30px rgba(0, 0, 0, 0.18);
    border-bottom: 1px solid #b6bdcc;
}

.toolbox-title {
    height: 17px;
    display: flex;
    align-items: center;
    justify-content: space-between;
    padding: 0 4px 0 9px;
    background-color: #9ab5d3;
    color: #2c3a4c;
    font-size: 10px;
}

.toolbox-search {
    height: 19px;
    margin: 0 1px;
    display: flex;
    align-items: center;
    justify-content: space-between;
    background-color: #fff;
    padding: 0 1px 0 5px;
    color: #8a8f9a;
    font-size: 11.500px;
    border-bottom: 1px solid #bcc5d0;
}

.toolbox-head {
    height: 22px;
    margin: 2px 1px 0;
    display: flex;
    align-items: center;
    gap: 7px;
    padding: 1px 0 0 5px;
    background-color: #ced6e6;
    border: 1px solid #bcc5d8;
    font-weight: 700;
    color: #111;
}

.box {
    width: 9px;
    height: 9px;
    flex: none;
}

.toolbox-group {
    height: 24px;
    display: flex;
    align-items: center;
    gap: 7px;
    padding: 0 9px 2px 6px;
    color: #8b8f98;
    font-size: 9.500px;
}

.toolbox-group.long em {
    margin-right: 7px;
}

.group-line {
    flex: 1;
    margin-top: -3px;
    border-top: 1px solid #808080;
}

.toolbox-item {
    height: 24px;
    display: flex;
    align-items: center;
    gap: 14px;
    padding: 2px 0 0 8px;
    color: #111;
    letter-spacing: -0.3px;
}
```
